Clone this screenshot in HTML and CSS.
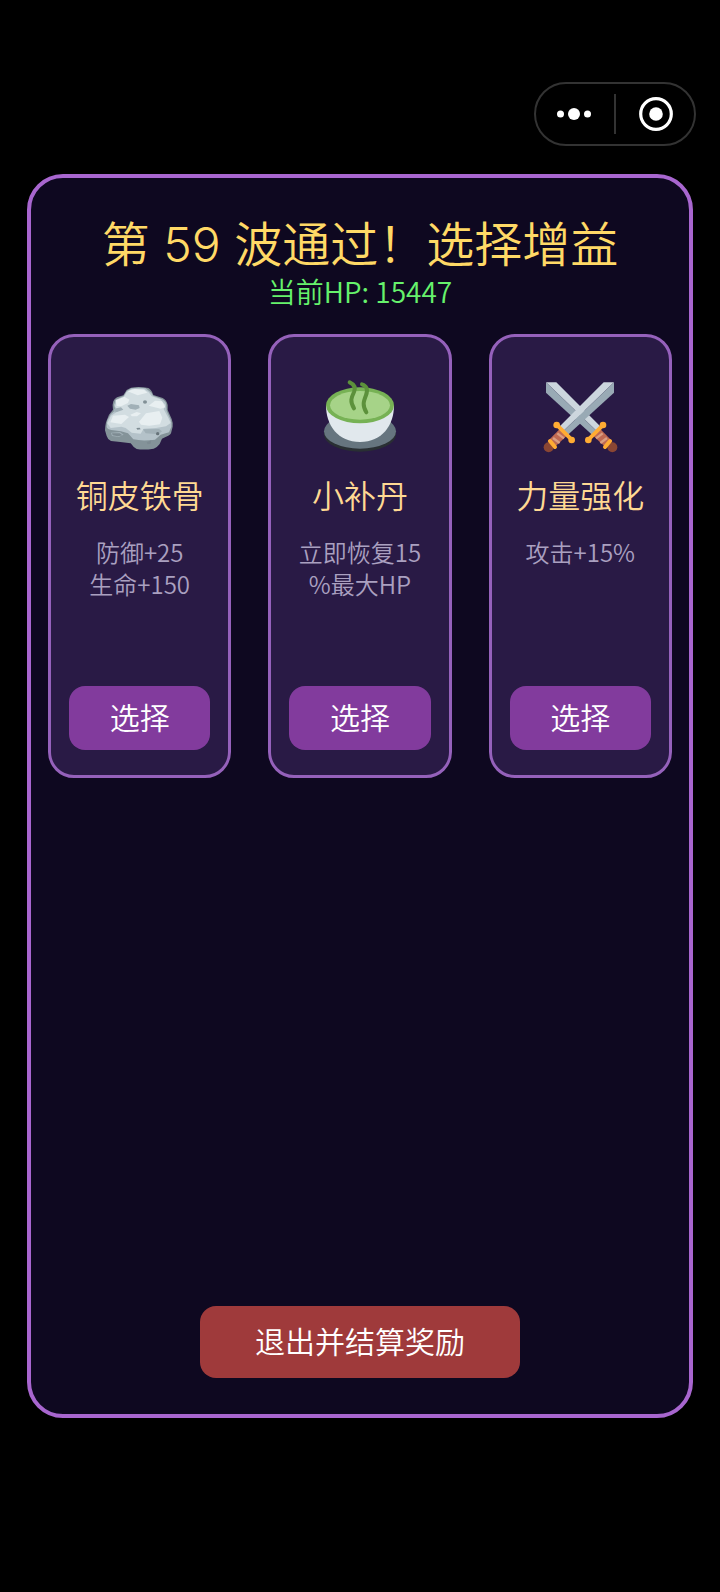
FILE: index.html
```html
<!DOCTYPE html>
<html lang="zh-CN">
  <head>
    <meta charset="UTF-8" />
    <meta name="viewport" content="width=device-width, initial-scale=1.0" />
    <title>选择增益</title>
    <link rel="stylesheet" href="styles.css">
  </head>
  <body>
    <header class="top-bar">
      <div class="capsule">
        <button class="capsule-btn" aria-label="更多">
          <svg width="36" height="36" viewBox="0 0 36 36" fill="#fff">
            <circle cx="3.5" cy="18" r="3.5" />
            <circle cx="17" cy="18" r="6" />
            <circle cx="30.5" cy="18" r="3.5" />
          </svg>
        </button>
        <span class="capsule-line"></span>
        <button class="capsule-btn" aria-label="关闭">
          <svg width="36" height="36" viewBox="0 0 36 36">
            <circle cx="19" cy="18" r="15.3" fill="none" stroke="#fff" stroke-width="3.2" />
            <circle cx="19" cy="18" r="6.8" fill="#fff" />
          </svg>
        </button>
      </div>
    </header>

    <main class="panel">
      <h1 class="title">第 59 波通过！选择增益</h1>
      <p class="hp">当前HP: 15447</p>

      <div class="cards">
        <section class="card">
          <!-- rock -->
          <svg class="card-icon" viewBox="40 30 216 216">
            <path fill="#849399" d="M108 60L121 53Q145 48 173 54Q182 58 188 75L216 84Q228 90 231 105L231 120L243 147Q248 160 246 170L241 190Q238 197 214 206L207 222Q200 232 189 236Q160 241 138 237Q128 232 120 220L89 216L61 213Q50 207 48 198L43 181Q43 170 46 157L55 134L67 119Q64 104 68 94Q71 87 79 82L98 76Z" />
            <path fill="#b4c2c9" d="M109 62L122 55Q145 51 165 55L182 68L187 77L213 87Q225 93 226 101L228 123L240 149Q244 160 242 171L235 187L210 194L193 209Q155 214 128 208L112 190L91 184L62 180Q50 178 48 171Q48 160 50 151L60 133L74 121L70 105L75 89L99 78Z" />
            <path fill="#d2dde1" d="M108 66L124 57L160 57L174 67L183 79L209 88L224 105L219 118L232 142L240 159L226 169L196 174L159 176L150 191L123 188L105 174L92 170L60 174L50 160L61 137L82 124L73 109L78 94L98 84Z" />
            <path fill="#e8eff1" d="M75 91L101 80L116 89L112 99L91 109L78 108ZM111 64L132 57L161 60L170 68L141 76L124 69ZM174 107L193 92L214 94L224 112L210 116ZM59 157L67 137L103 134L115 141L92 162ZM145 155L166 130L206 123L215 143L208 163L176 167L151 164ZM119 134L138 126L151 130L139 139L124 139Z" />
            <path fill="#a1b0b7" d="M110 107L121 102L145 106L147 114L135 119L118 116ZM71 116L91 112L98 119L79 126L68 124ZM157 178L205 177L214 184L204 193L165 190ZM61 188L88 186L99 194L84 201L64 198Z" />
            <path fill="#7d8b92" d="M64 190L87 190L95 196L82 199L66 196ZM168 217L182 211L180 221L171 223ZM137 174L147 173L150 178L140 179Z" />
            <ellipse cx="163" cy="96" rx="6" ry="5" fill="#819096" />
            <circle cx="201" cy="191" r="5" fill="#667379" />
          </svg>
          <h2 class="card-name">铜皮铁骨</h2>
          <p class="card-desc">防御+25<br>生命+150</p>
          <button class="card-btn">选择</button>
        </section>

        <section class="card">
          <!-- tea bowl -->
          <svg class="card-icon" viewBox="42 30 216 216">
            <ellipse cx="150" cy="193" rx="108" ry="52" fill="#292f33" />
            <ellipse cx="150" cy="184" rx="108" ry="52" fill="#66757f" />
            <path fill="#e1e8ed" d="M48 106C48 167 84 216 150 216S252 167 252 106Z" />
            <ellipse cx="150" cy="106" rx="102" ry="54" fill="#77b255" />
            <ellipse cx="150" cy="106" rx="90" ry="43" fill="#a6d388" />
            <path fill="none" stroke="#5c913b" stroke-width="12" stroke-linecap="round" stroke-linejoin="round" d="M119 37C132 43 138 52 132 66C124 83 119 94 132 115M156 43C169 47 175 58 168 76C160 96 157 106 169 127" />
          </svg>
          <h2 class="card-name">小补丹</h2>
          <p class="card-desc">立即恢复15<br>%最大HP</p>
          <button class="card-btn">选择</button>
        </section>

        <section class="card">
          <!-- crossed swords, the second one lies on top -->
          <svg class="card-icon" viewBox="45 30 216 216">
            <path fill="#ccd6dd" d="M51 37L82 37L215 170L203 183Z" />
            <path fill="#99aab5" d="M51 37L203 183L190 195L51 68Z" />
            <path fill="#bf6952" d="M191 196L213 176L250 214L232 234Z" />
            <path stroke="#d99e82" stroke-width="7" d="M201 205L221 190M214 219L234 204" />
            <circle cx="250" cy="232" r="15" fill="#8a4633" />
            <path stroke="#ffac33" stroke-width="12" stroke-linecap="round" d="M179 208L221 166M228 231L243 213" />
            <circle cx="178" cy="210" r="10" fill="#ffac33" />
            <circle cx="222" cy="165" r="10" fill="#ffac33" />

            <path fill="#ccd6dd" d="M255 37L224 37L91 170L103 183Z" />
            <path fill="#99aab5" d="M255 37L103 183L116 195L255 68Z" />
            <path fill="#bf6952" d="M115 196L93 176L56 214L74 234Z" />
            <path stroke="#d99e82" stroke-width="7" d="M105 205L85 190M92 219L72 204" />
            <circle cx="59" cy="232" r="15" fill="#8a4633" />
            <path stroke="#ffac33" stroke-width="12" stroke-linecap="round" d="M127 208L85 166M78 231L63 213" />
            <circle cx="128" cy="210" r="10" fill="#ffac33" />
            <circle cx="83" cy="165" r="10" fill="#ffac33" />
          </svg>
          <h2 class="card-name">力量强化</h2>
          <p class="card-desc">攻击+15%</p>
          <button class="card-btn">选择</button>
        </section>
      </div>

      <button class="exit-btn">退出并结算奖励</button>
    </main>
  </body>
</html>
```
FILE: styles.css
```css
* {
  margin: 0;
  padding: 0;
  box-sizing: border-box;
}

body {
  display: flex;
  flex-direction: column;
  min-height: 100vh;
  padding: 82px 27px 174px;
  background: #000;
  color: #fff;
  font-family: "Noto Sans CJK SC", sans-serif;
  font-weight: 350;
  text-align: center;
}

button {
  border: none;
  color: #fff;
  font-family: inherit;
  font-weight: inherit;
  cursor: pointer;
}

.top-bar {
  display: flex;
  justify-content: flex-end;
  margin-right: -3px;
  margin-bottom: 28px;
}

.capsule {
  display: flex;
  align-items: center;
  width: 162px;
  height: 64px;
  border: 2px solid #333;
  border-radius: 32px;
}

.capsule-btn {
  display: flex;
  flex: 1;
  align-items: center;
  justify-content: center;
  height: 100%;
  background: none;
}

.capsule-line {
  width: 2px;
  height: 40px;
  background: #333;
}

.panel {
  display: flex;
  flex: 1;
  flex-direction: column;
  padding: 39px 17px 36px;
  border: 4px solid #a866cf;
  border-radius: 36px;
  background: #0e0820;
}

.title {
  color: #ffd966;
  font-family: Inter, "Noto Sans CJK SC", sans-serif;
  font-size: 48px;
  font-weight: inherit;
  line-height: 56px;
}

.hp {
  margin-bottom: 25px;
  color: #66f26c;
  font-size: 28px;
  line-height: 36px;
}

.cards {
  display: grid;
  grid-template-columns: repeat(3, 1fr);
  gap: 37px;
}

.card {
  display: flex;
  flex-direction: column;
  align-items: center;
  min-height: 444px;
  padding: 43px 18px 25px;
  border: 3px solid #9561bb;
  border-radius: 26px;
  background: #291a45;
}

.card-icon {
  width: 72px;
  height: 72px;
  margin-bottom: 22px;
  overflow: visible;
}

.card-name {
  margin-bottom: 22px;
  color: #ffd993;
  font-size: 32px;
  font-weight: inherit;
  line-height: 40px;
  white-space: nowrap;
}

.card-desc {
  margin-bottom: 24px;
  color: #aaa0c0;
  font-size: 24px;
  line-height: 32px;
  white-space: nowrap;
}

.card-btn {
  width: 100%;
  height: 64px;
  margin-top: auto;
  padding-bottom: 4px;
  border-radius: 16px;
  background: #823b9d;
  font-size: 30px;
}

.exit-btn {
  align-self: center;
  width: 320px;
  max-width: 100%;
  height: 72px;
  margin-top: auto;
  padding-bottom: 4px;
  border-radius: 16px;
  background: #9f3a3b;
  font-size: 30px;
}
```
